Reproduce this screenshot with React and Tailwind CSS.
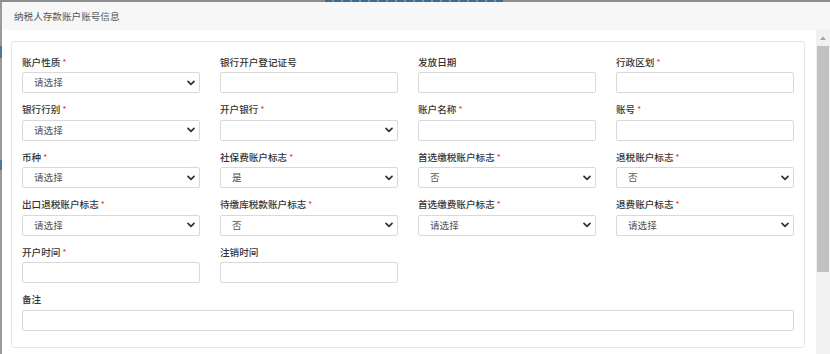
const fields = [
  { label: "账户性质", required: true, type: "select", value: "请选择" },
  { label: "银行开户登记证号", required: false, type: "input" },
  { label: "发放日期", required: false, type: "input" },
  { label: "行政区划", required: true, type: "input" },
  { label: "银行行别", required: true, type: "select", value: "请选择" },
  { label: "开户银行", required: true, type: "select", value: "" },
  { label: "账户名称", required: true, type: "input" },
  { label: "账号", required: true, type: "input" },
  { label: "币种", required: true, type: "select", value: "请选择" },
  { label: "社保费账户标志", required: true, type: "select", value: "是" },
  { label: "首选缴税账户标志", required: true, type: "select", value: "否" },
  { label: "退税账户标志", required: true, type: "select", value: "否" },
  { label: "出口退税账户标志", required: true, type: "select", value: "请选择" },
  { label: "待缴库税款账户标志", required: true, type: "select", value: "否" },
  { label: "首选缴费账户标志", required: true, type: "select", value: "请选择" },
  { label: "退费账户标志", required: true, type: "select", value: "请选择" },
  { label: "开户时间", required: true, type: "input" },
  { label: "注销时间", required: false, type: "input" },
];

function Chevron() {
  return (
    <svg className="w-[8px] h-[6px]" viewBox="0 0 8 6" fill="none">
      <path d="M1 1.3l3 3 3-3" stroke="#333" strokeWidth={1.7} strokeLinecap="round" strokeLinejoin="round" />
    </svg>
  );
}

function Field({ label, required, type, value, wide }) {
  return (
    <div className={wide ? "col-span-4" : ""}>
      <div className="h-[14px] leading-[14px] mb-[3.5px] text-[9.6px] text-[#333] font-medium flex items-center">
        <span>{label}</span>
        {required && <span className="ml-[2px] text-[#e53935] text-[8px] leading-none">*</span>}
      </div>
      {type === "select" ? (
        <div className="h-[21px] border border-[#d9d9d9] rounded-[2px] bg-white flex items-center justify-between pl-[11px] pr-[4px]">
          <span className="text-[9.6px] text-[#555]">{value}</span>
          <Chevron />
        </div>
      ) : (
        <div className="h-[21px] border border-[#d9d9d9] rounded-[2px] bg-white" />
      )}
    </div>
  );
}

export default function App() {
  return (
    <div
      className="w-[830px] h-[354px] overflow-hidden flex flex-col bg-[#8c8c8c]"
      style={{ fontFamily: '"Noto Sans CJK SC", "Noto Sans", sans-serif' }}
    >
      {/* backdrop peeking at top */}
      <div className="h-[2px] flex shrink-0">
        <div className="w-[325px]" />
        <div className="w-[180px] bg-[repeating-linear-gradient(90deg,#3a6b92_0_7px,#8c8c8c_7px_9px)]" />
      </div>

      <div className="flex flex-1 min-h-0">
        {/* backdrop peeking at left */}
        <div className="w-[2px] flex flex-col shrink-0 bg-[#9a9a9a]">
          <div className="h-[44px]" />
          <div className="h-[12px] bg-[#4f7896]" />
          <div className="h-[102px]" />
          <div className="h-[10px] bg-[#4f7896]" />
        </div>

        {/* Modal */}
        <div className="flex-1 flex flex-col bg-white">
          <div className="h-[28px] shrink-0 bg-[#f7f7f7] flex items-center pl-[12px] text-[9.6px] text-[#555]">
            纳税人存款账户账号信息
          </div>

          <div className="flex flex-1 min-h-0">
            <div className="flex-1 pl-[9px] pr-[11px] pt-[11px]">
              <div className="border border-[#e6e6e6] rounded-[3px] px-[10px] pt-[12.5px] pb-[16px]">
                <div className="grid grid-cols-4 gap-x-[20px] gap-y-[9px]">
                  {fields.map((f) => (
                    <Field key={f.label} {...f} />
                  ))}
                  <Field label="备注" type="input" wide />
                </div>
              </div>
            </div>

            {/* Scrollbar */}
            <div className="w-[14px] shrink-0 bg-[#f1f1f1] flex flex-col">
              <div className="h-[16px] flex items-center justify-center">
                <svg className="w-[6px] h-[4px]" viewBox="0 0 6 4">
                  <path d="M0 4L3 0.5 6 4z" fill="#a3a3a3" />
                </svg>
              </div>
              <div className="ml-[1px] w-[12px] h-[226px] bg-[#c1c1c1]" />
            </div>
          </div>
        </div>
      </div>
    </div>
  );
}
